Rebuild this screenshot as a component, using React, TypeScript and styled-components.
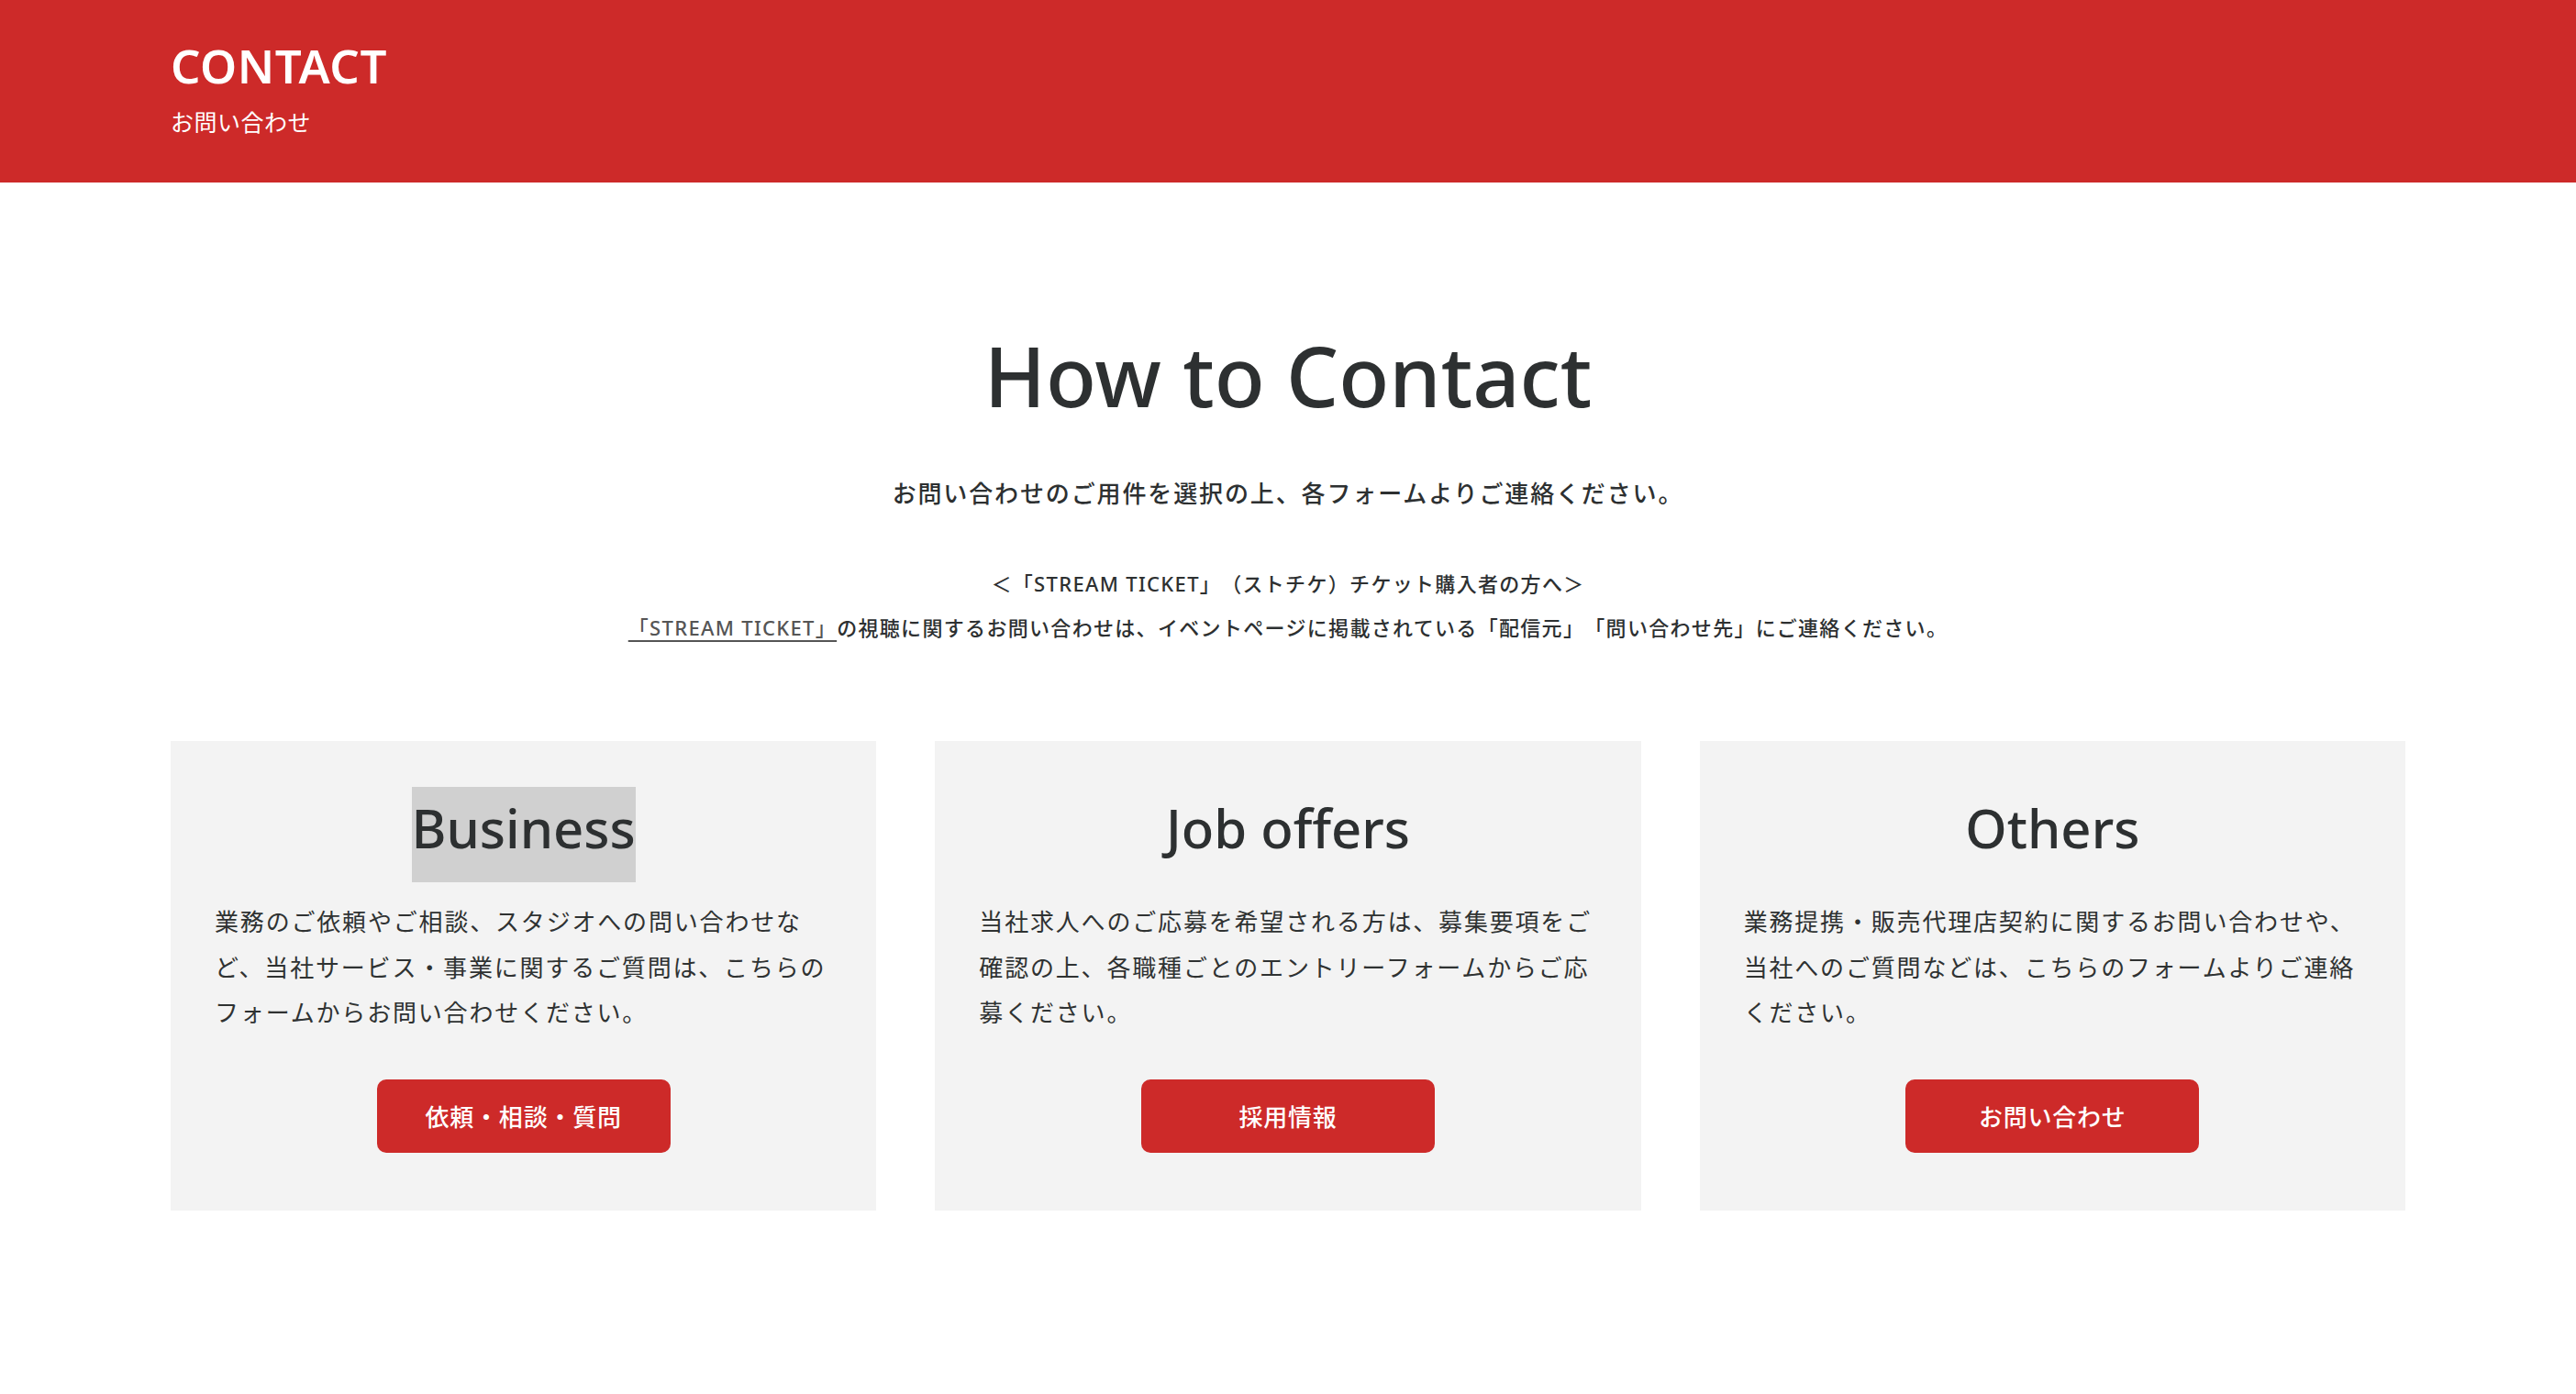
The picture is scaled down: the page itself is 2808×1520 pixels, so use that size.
import React from 'react';
import styled, { createGlobalStyle } from 'styled-components';

const GlobalStyle = createGlobalStyle`
  * {
    box-sizing: border-box;
  }
  html, body {
    margin: 0;
    padding: 0;
    background: #ffffff;
  }
  body {
    font-family: "Noto Sans", "Noto Sans CJK JP", sans-serif;
    color: #333333;
    text-spacing-trim: space-all;
  }
`;

const PageHeader = styled.header`
  background-color: #cd2a29;
  height: 199px;
  padding: 41px 186px 0;
  color: #ffffff;
`;

const HeaderTitle = styled.h1`
  margin: 0;
  font-size: 51px;
  font-weight: 600;
  line-height: 61px;
  letter-spacing: 0.01em;
`;

const HeaderSub = styled.p`
  margin: 13px 0 0;
  font-size: 25px;
  font-weight: 400;
  line-height: 37px;
  letter-spacing: 0.02em;
`;

const Main = styled.main`
  max-width: 2436px;
  margin: 0 auto;
  padding: 156px 0 0;
`;

const Heading = styled.h2`
  margin: 0;
  text-align: center;
  font-size: 90px;
  font-weight: 500;
  line-height: 109px;
  color: #2d3031;
`;

const Lead = styled.p`
  margin: 55px 0 0;
  text-align: center;
  font-size: 26px;
  font-weight: 500;
  line-height: 39px;
  letter-spacing: 0.072em;
  color: #2d3031;
`;

const Notice = styled.div`
  margin-top: 54px;
  text-align: center;
  font-size: 22px;
  font-weight: 500;
  line-height: 48px;
  letter-spacing: 0.06em;
  color: #2d3031;
`;

const NoticeLine = styled.p`
  margin: 0;
`;

const TicketLink = styled.a`
  color: #555555;
  text-decoration: underline;
  text-decoration-thickness: 2px;
  text-underline-offset: 5px;
`;

const CardGrid = styled.div`
  display: grid;
  grid-template-columns: repeat(3, 1fr);
  gap: 64px;
  margin-top: 100px;
`;

const Card = styled.section`
  background: #f3f3f3;
  height: 512px;
  padding: 50px 48px 0;
  display: flex;
  flex-direction: column;
  align-items: center;
`;

const CardTitle = styled.h3<{ $selected?: boolean }>`
  margin: 0;
  padding-bottom: 14px;
  font-size: 58px;
  font-weight: 500;
  line-height: 90px;
  color: #2d3031;
  background: ${(p) => (p.$selected ? '#d0d0d0' : 'transparent')};
`;

const CardText = styled.p`
  margin: 19px 0 0;
  align-self: stretch;
  font-size: 26px;
  font-weight: 400;
  line-height: 49.5px;
  letter-spacing: 0.07em;
  color: #2f3232;
  height: 148.5px;
`;

const CardButton = styled.a`
  margin-top: 47px;
  width: 320px;
  height: 80px;
  display: flex;
  align-items: center;
  justify-content: center;
  background: #cd2a29;
  border-radius: 10px;
  color: #ffffff;
  font-size: 26px;
  font-weight: 500;
  letter-spacing: 0.03em;
  text-decoration: none;
  cursor: pointer;
`;

const cards = [
  {
    title: 'Business',
    text: '業務のご依頼やご相談、スタジオへの問い合わせなど、当社サービス・事業に関するご質問は、こちらのフォームからお問い合わせください。',
    button: '依頼・相談・質問',
    selected: true,
  },
  {
    title: 'Job offers',
    text: '当社求人へのご応募を希望される方は、募集要項をご確認の上、各職種ごとのエントリーフォームからご応募ください。',
    button: '採用情報',
  },
  {
    title: 'Others',
    text: '業務提携・販売代理店契約に関するお問い合わせや、当社へのご質問などは、こちらのフォームよりご連絡ください。',
    button: 'お問い合わせ',
  },
];

const App: React.FC = () => {
  return (
    <>
      <GlobalStyle />
      <PageHeader>
        <HeaderTitle>CONTACT</HeaderTitle>
        <HeaderSub>お問い合わせ</HeaderSub>
      </PageHeader>
      <Main>
        <Heading>How to Contact</Heading>
        <Lead>お問い合わせのご用件を選択の上、各フォームよりご連絡ください。</Lead>
        <Notice>
          <NoticeLine>＜「STREAM TICKET」（ストチケ）チケット購入者の方へ＞</NoticeLine>
          <NoticeLine>
            <TicketLink href="#">「STREAM TICKET」</TicketLink>
            の視聴に関するお問い合わせは、イベントページに掲載されている「配信元」「問い合わせ先」にご連絡ください。
          </NoticeLine>
        </Notice>
        <CardGrid>
          {cards.map((c) => (
            <Card key={c.title}>
              <CardTitle $selected={c.selected}>{c.title}</CardTitle>
              <CardText>{c.text}</CardText>
              <CardButton href="#">{c.button}</CardButton>
            </Card>
          ))}
        </CardGrid>
      </Main>
    </>
  );
};

export default App;
